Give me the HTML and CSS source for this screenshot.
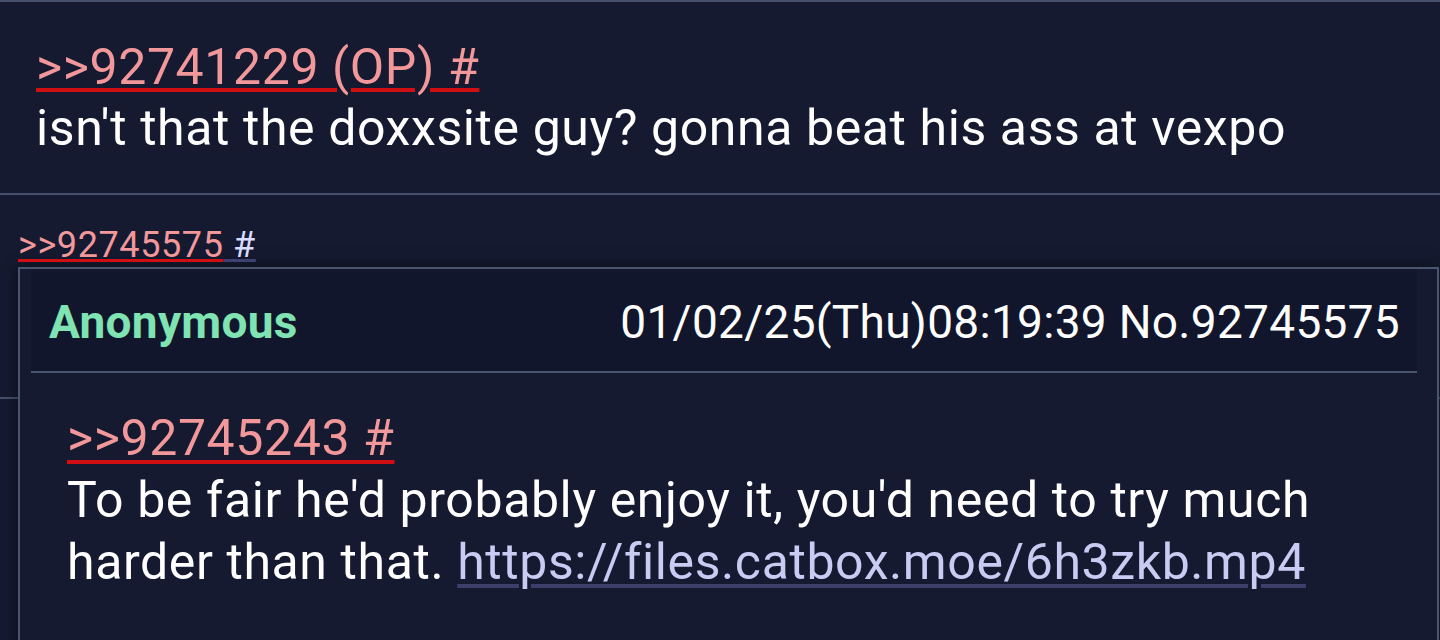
FILE: index.html
```html
<!DOCTYPE html>
<html lang="en">
<head>
    <meta charset="UTF-8">
    <meta name="viewport" content="width=device-width, initial-scale=1.0">
    <title>Thread</title>
    <link rel="stylesheet" href="styles.css">
</head>
<body>
<div class="thread">
    <div class="post">
        <a class="quote" href="javascript:;">&gt;&gt;92741229 (OP) #</a>
        <div class="comment">isn't that the doxxsite guy? gonna beat his ass at vexpo</div>
    </div>
    <div class="post behind"></div>

    <div class="popup">
        <div class="popup-link"><a class="quote small" href="javascript:;">&gt;&gt;92745575</a><a class="hash" href="javascript:;"> #</a></div>
        <div class="card">
            <div class="card-head">
                <span class="name">Anonymous</span>
                <span class="date">01/02/25(Thu)08:19:39 No.92745575</span>
            </div>
            <div class="card-body">
                <a class="quote" href="javascript:;">&gt;&gt;92745243 #</a>
                <div class="comment">To be fair he'd probably enjoy it, you'd need to try much harder than that. <a class="link" href="javascript:;">https://files.catbox.moe/6h3zkb.mp4</a></div>
            </div>
        </div>
    </div>
</div>
</body>
</html>
```

FILE: styles.css
```css
*{
    margin: 0;
    padding: 0;
    box-sizing: border-box;
}
html, body{
    height: 100%;
    overflow: hidden;
}
body{
    background: #151a31;
    color: #ffffff;
    font-family: Roboto, "Noto Sans", sans-serif;
}
a{
    text-decoration: none;
}
.thread{
    position: relative;
    height: 100%;
}
.post{
    border-top: 2px solid #46506a;
    padding: 35px 36px 34px 36px;
    font-size: 50px;
    letter-spacing: 0.6px;
    line-height: 61px;
}
.post.behind{
    height: 206px;
    padding: 0;
    border-bottom: 2px solid #46506a;
}
.quote{
    color: #f2979a;
    text-decoration: underline;
    text-decoration-color: #d00f12;
    text-decoration-thickness: 4px;
    text-underline-offset: 4px;
}
.comment{
    color: #ffffff;
}

/* reply popup on top of the thread */
.popup{
    position: absolute;
    top: 195px;
    left: 0;
    right: 0;
    bottom: 0;
    padding-top: 30px;
}
.popup-link{
    padding-left: 18px;
    font-size: 36px;
    letter-spacing: 0.6px;
    line-height: 40px;
}
.quote.small{
    text-decoration-thickness: 3px;
    text-underline-offset: 2px;
}
.hash{
    color: #d8dcff;
    text-decoration: underline;
    text-decoration-color: #3d4070;
    text-decoration-thickness: 3px;
    text-underline-offset: 2px;
}
.card{
    margin: 2px 1px 0 18px;
    height: 400px;
    background: #161a30;
    border: 2px solid #4a5570;
    border-bottom: none;
    box-shadow: 0 0 14px rgba(0, 0, 0, 0.55);
}
.card-head{
    display: flex;
    justify-content: space-between;
    align-items: center;
    height: 104px;
    margin: 0 20px 0 11px;
    padding: 4px 17px 0 18px;
    background: #12162d;
    border-bottom: 2px solid #4a5570;
    font-size: 46px;
    letter-spacing: 0.3px;
}
.name{
    color: #7fe3b2;
    font-weight: bold;
}
.date{
    color: #ffffff;
}
.card-body{
    padding: 34px 36px 0 47px;
    font-size: 50px;
    letter-spacing: 0.6px;
    line-height: 62px;
}
.card-body .quote{
    text-underline-offset: 5px;
}
.link{
    color: #c8cbf2;
    text-decoration: underline;
    text-decoration-color: #3d3f6b;
    text-decoration-thickness: 4px;
    text-underline-offset: 5px;
}
```
